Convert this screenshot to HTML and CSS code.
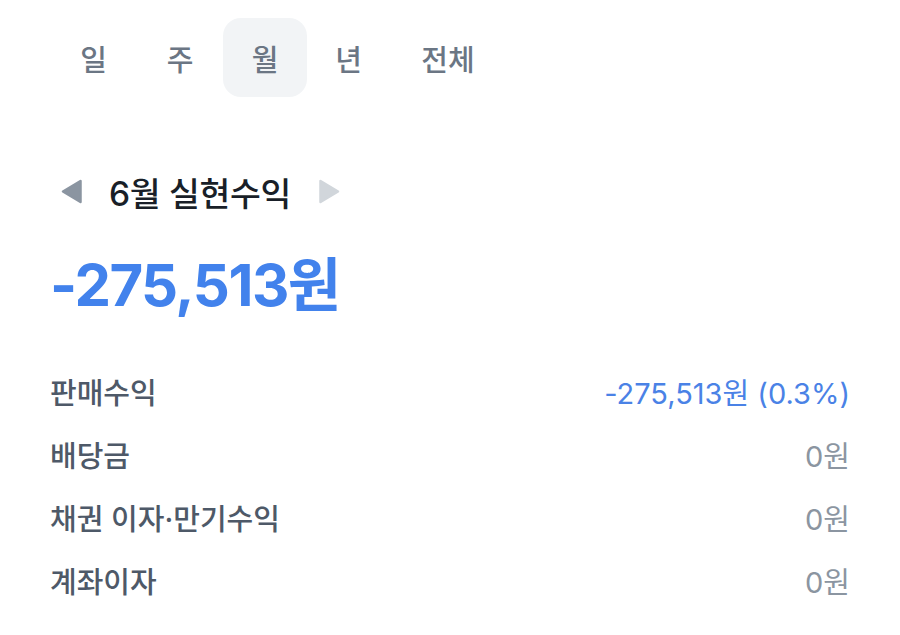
FILE: index.html
```html
<!DOCTYPE html>
<html lang="ko">
<head>
<meta charset="utf-8">
<link rel="stylesheet" href="styles.css">
</head>
<body>
<div class="page">
  <nav class="tabs">
    <div class="tab">일</div>
    <div class="tab">주</div>
    <div class="tab active">월</div>
    <div class="tab">년</div>
    <div class="tab">전체</div>
  </nav>
  <div class="period">
    <svg class="arrow" width="21" height="25" viewBox="0 0 21 25"><path d="M19.5 2 L19.5 23 L2 12.5 Z" fill="#8b95a1" stroke="#8b95a1" stroke-width="2.5" stroke-linejoin="round"/></svg>
    <h2 class="period-title">6월 실현수익</h2>
    <svg class="arrow" width="21" height="25" viewBox="0 0 21 25"><path d="M1.5 2 L1.5 23 L19 12.5 Z" fill="#d1d6db" stroke="#d1d6db" stroke-width="2.5" stroke-linejoin="round"/></svg>
  </div>
  <div class="total">-275,513원</div>
  <ul class="rows">
    <li class="row"><span class="label">판매수익</span><span class="value blue">-275,513원 (0.3%)</span></li>
    <li class="row"><span class="label">배당금</span><span class="value">0원</span></li>
    <li class="row"><span class="label">채권 이자·만기수익</span><span class="value">0원</span></li>
    <li class="row"><span class="label">계좌이자</span><span class="value">0원</span></li>
  </ul>
</div>
</body>
</html>
```

FILE: styles.css
```css
* { box-sizing: border-box; margin: 0; padding: 0; }
html, body { background: #fff; }
body {
  font-family: "Inter", "Noto Sans CJK KR", "Noto Sans", sans-serif;
  width: 900px;
  height: 635px;
  overflow: hidden;
}
.page {
  padding: 18px 50px 0 50px;
}
.tabs {
  display: flex;
  align-items: center;
  height: 79px;
}
.tab {
  height: 79px;
  min-width: 84px;
  display: flex;
  align-items: center;
  justify-content: center;
  font-size: 29px;
  font-weight: 500;
  color: #6b7684;
  border-radius: 18px;
}
.tab:first-child { min-width: 87px; }
.tab:nth-child(2) { min-width: 86px; }
.tab:nth-child(4) { min-width: 83px; }
.tab:last-child { padding: 0 0 0 16px; min-width: 100px; }
.tab.active { background: #f2f4f6; }
.period {
  display: flex;
  align-items: center;
  margin-top: 74px;
  padding-left: 11px;
  height: 40px;
}
.arrow { flex: none; }
.period-title {
  font-size: 33.5px;
  font-weight: 500;
  color: #191f28;
  margin: 0 28px 0 27px;
  letter-spacing: -0.3px;
}
.total {
  margin-top: 38px;
  font-size: 58px;
  font-weight: 700;
  color: #4282ec;
  letter-spacing: -1.5px;
  line-height: 72px;
}
.rows {
  list-style: none;
  margin-top: 38px;
}
.row {
  display: flex;
  justify-content: space-between;
  align-items: center;
  height: 63px;
  font-size: 29px;
}
.label { color: #4e5968; font-weight: 500; }
.value { color: #8b95a1; font-weight: 400; }
.value.blue { color: #4a82e6; }
```
